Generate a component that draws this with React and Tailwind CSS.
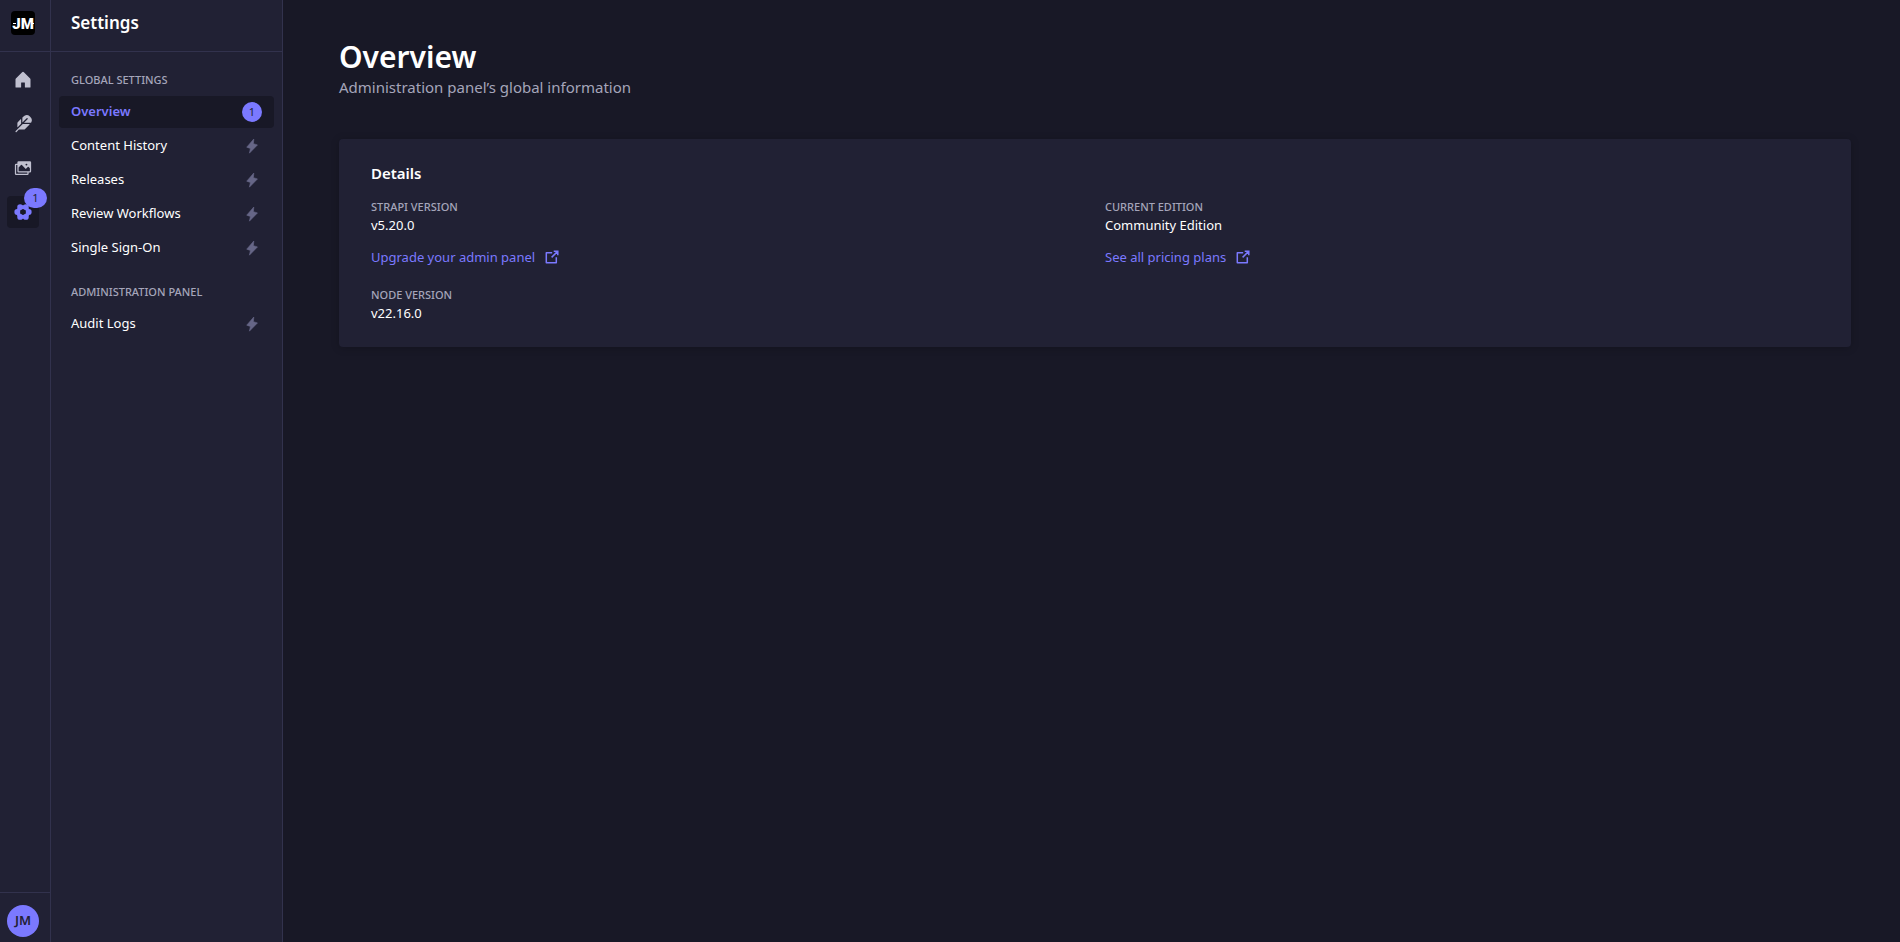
import React from "react";
import { PiHouseFill, PiFeatherFill, PiImagesFill } from "react-icons/pi";

const sections = [
  {
    title: "Global Settings",
    links: [
      { label: "Overview", active: true, badge: 1 },
      { label: "Content History" },
      { label: "Releases" },
      { label: "Review Workflows" },
      { label: "Single Sign-On" },
    ],
  },
  { title: "Administration Panel", links: [{ label: "Audit Logs" }] },
];

const mainLinks = [
  { label: "Home", Icon: PiHouseFill },
  { label: "Content Manager", Icon: PiFeatherFill },
  { label: "Media Library", Icon: PiImagesFill },
  { label: "Settings", Icon: Cog, active: true, badge: 1 },
];

const details = [
  { term: "Strapi version", value: "v5.20.0", link: "Upgrade your admin panel" },
  { term: "current edition", value: "Community Edition", link: "See all pricing plans" },
  { term: "Node version", value: "v22.16.0" },
];

function Logo() {
  return (
    <svg viewBox="0 0 24 24" className="size-6" aria-hidden="true">
      <rect width="24" height="24" rx="4" fill="#000" />
      <text
        x="12"
        y="18"
        textAnchor="middle"
        fill="#fff"
        className="font-['Roboto',sans-serif] text-[15px] font-black"
      >
        JM
      </text>
      <path d="M2 12.500h3M20 12.500h3" stroke="#fff" strokeWidth="1" />
    </svg>
  );
}

function Cog({ className }) {
  return (
    <svg viewBox="0 0 20 20" className={className} fill="currentColor" aria-hidden="true">
      <circle cx="10" cy="10" r="5.4" fill="none" stroke="currentColor" strokeWidth="4.2" />
      <circle cx="16.4" cy="10" r="3.2" />
      <circle cx="13.2" cy="15.500" r="3.2" />
      <circle cx="6.8" cy="15.500" r="3.2" />
      <circle cx="3.6" cy="10" r="3.2" />
      <circle cx="6.8" cy="4.500" r="3.2" />
      <circle cx="13.2" cy="4.500" r="3.2" />
    </svg>
  );
}

function Lightning() {
  return (
    <svg viewBox="0 0 16 16" className="size-4" fill="#666687" aria-hidden="true">
      <path
        d="M9.800 1 2.700 9.200l3.700 1.200L5.400 15.200 13.500 6.900 9.400 5.700Z"
        stroke="#666687"
        strokeWidth="0.6"
        strokeLinejoin="round"
      />
    </svg>
  );
}

function ExternalLink() {
  return (
    <svg
      viewBox="0 0 14 14"
      className="size-[14px]"
      fill="none"
      stroke="currentColor"
      strokeWidth="1.5"
      aria-hidden="true"
    >
      <path d="M7.200 2.700H1.300v10h10V7.200" strokeLinejoin="round" />
      <path d="M8.700 1.200h4.100v4.100M12.600 1.400 6.600 7.400" />
    </svg>
  );
}

function MainNav() {
  return (
    <nav
      aria-label="Main"
      className="flex w-[51px] shrink-0 flex-col border-r border-[#32324d] bg-[#212134]"
    >
      <div className="flex h-[52px] shrink-0 border-b border-[#32324d] pt-[11px] pl-[11px]">
        <Logo />
      </div>
      <ul className="flex flex-1 flex-col gap-3 pt-3 pl-[7px]">
        {mainLinks.map(({ label, Icon, active, badge }) => (
          <li key={label} className="relative size-8">
            <a
              href="#"
              aria-label={label}
              className={
                active
                  ? "flex size-8 items-center justify-center rounded bg-[#181826] text-[#7b79ff]"
                  : "flex size-8 items-center justify-center rounded text-[#c0c0cf]"
              }
            >
              <Icon className={active ? "size-[18px]" : "size-5"} />
            </a>
            {badge && (
              <span className="absolute -top-2 left-[17px] flex h-5 w-[23px] items-center justify-center rounded-[10px] bg-[#7b79ff] text-[11px] text-[#212134]">
                {badge}
              </span>
            )}
          </li>
        ))}
      </ul>
      <div className="border-t border-[#32324d] pt-3 pb-[5px] pl-[7px]">
        <button
          type="button"
          className="flex size-8 items-center justify-center rounded-full bg-[#7b79ff] text-[13px] font-semibold text-[#212134]"
        >
          JM
        </button>
      </div>
    </nav>
  );
}

function SettingsNav() {
  return (
    <nav
      aria-label="Settings"
      className="w-58 shrink-0 border-r border-[#32324d] bg-[#212134]"
    >
      <div className="flex h-[52px] border-b border-[#32324d] pt-[11px] pl-5">
        <h2 className="text-[17px] leading-6 font-semibold text-white">Settings</h2>
      </div>
      <div className="flex flex-col gap-5 px-2 pt-5">
        {sections.map((section) => (
          <section key={section.title} className="flex flex-col gap-2">
            <h3 className="px-3 text-[11px] leading-4 font-medium text-[#a5a5ba] uppercase">
              {section.title}
            </h3>
            <ul className="flex flex-col gap-[2px]">
              {section.links.map((link) => (
                <li key={link.label}>
                  <a
                    href="#"
                    className={
                      link.active
                        ? "flex h-8 items-center justify-between rounded bg-[#181826] px-3 text-[13px] font-semibold text-[#7b79ff]"
                        : "flex h-8 items-center justify-between rounded px-3 text-[13px] text-white"
                    }
                  >
                    {link.label}
                    {link.badge ? (
                      <span className="flex size-5 items-center justify-center rounded-full bg-[#7b79ff] text-[11px] font-normal text-[#212134]">
                        {link.badge}
                      </span>
                    ) : (
                      <span className="pr-[2px]">
                        <Lightning />
                      </span>
                    )}
                  </a>
                </li>
              ))}
            </ul>
          </section>
        ))}
      </div>
    </nav>
  );
}

export default function App() {
  return (
    <div className="flex min-h-screen bg-[#181826] font-['Noto_Sans','Open_Sans',sans-serif]">
      <MainNav />
      <SettingsNav />
      <main className="flex-1 pt-[38px] pr-[49px] pl-14">
        <header className="pb-[41px]">
          <h1 className="text-[30px] leading-[38px] font-semibold text-white">Overview</h1>
          <p className="text-[15px] leading-[22px] text-[#a5a5ba]">
            Administration panel’s global information
          </p>
        </header>
        <section className="flex flex-col gap-4 rounded bg-[#212134] px-8 py-6 shadow-[0_1px_8px_rgba(3,3,5,0.2)]">
          <h2 className="text-[15px] leading-5 font-semibold text-white">Details</h2>
          <dl className="grid grid-cols-2 gap-5">
            {details.map((item) => (
              <div key={item.term}>
                <dt className="text-[11px] leading-4 font-medium text-[#a5a5ba] uppercase">
                  {item.term}
                </dt>
                <dd className="text-[13px] leading-5 text-white">{item.value}</dd>
                {item.link && (
                  <dd className="mt-3 text-[13px] leading-5">
                    <a href="#" className="inline-flex items-center gap-[10px] text-[#7b79ff]">
                      {item.link}
                      <ExternalLink />
                    </a>
                  </dd>
                )}
              </div>
            ))}
          </dl>
        </section>
      </main>
    </div>
  );
}
